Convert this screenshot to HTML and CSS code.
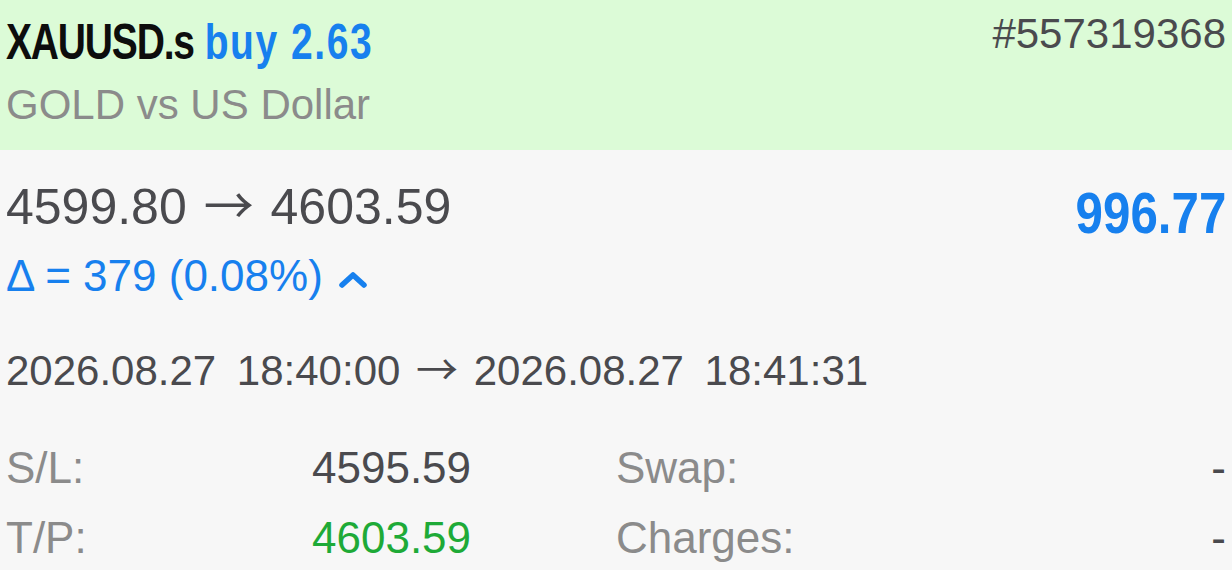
FILE: index.html
```html
<!DOCTYPE html>
<html lang="en">
<head>
  <meta charset="UTF-8">
  <meta name="viewport" content="width=device-width, initial-scale=1.0">
  <title>XAUUSD.s position</title>
  <link rel="stylesheet" href="styles.css">
</head>
<body>
  <div class="head">
    <div class="head-left">
      <div class="title"><span class="symbol">XAUUSD.s</span> <span class="side">buy 2.63</span></div>
      <div class="desc">GOLD vs US Dollar</div>
    </div>
    <div class="ticket">#557319368</div>
  </div>

  <div class="content">
    <div class="price-row">
      <div>
        <div class="prices">4599.80 <span class="arrow">→</span> 4603.59</div>
        <div class="delta">
          <span>Δ = 379 (0.08%)</span>
          <svg class="chevron" width="30" height="18" viewBox="0 0 30 18">
            <polyline points="4,14 15,4 26,14" fill="none" stroke="currentColor" stroke-width="5.5" stroke-linecap="round" stroke-linejoin="round"/>
          </svg>
        </div>
      </div>
      <div class="profit">996.77</div>
    </div>

    <div class="times">
      <span class="dt">2026.08.27 18:40:00</span> <span class="arrow">→</span> <span class="dt">2026.08.27 18:41:31</span>
    </div>

    <div class="details">
      <div class="label">S/L:</div>
      <div class="value">4595.59</div>
      <div class="label">Swap:</div>
      <div class="dash">-</div>

      <div class="label">T/P:</div>
      <div class="value tp">4603.59</div>
      <div class="label">Charges:</div>
      <div class="dash">-</div>
    </div>
  </div>
</body>
</html>
```

FILE: styles.css
```css
body {
  margin: 0;
  font-family: "Liberation Sans", Arial, sans-serif;
  font-size: 42px;
  color: #4a4a4e;
  background-color: #f7f7f7;
}
.head {
  display: flex;
  justify-content: space-between;
  height: 150px;
  box-sizing: border-box;
  padding: 12px 6px 0 6px;
  background-color: #dcfbd7;
}
.title {
  font-weight: bold;
  font-size: 50px;
  line-height: 60px;
  white-space: nowrap;
  transform: scaleX(0.78);
  transform-origin: left center;
}
.symbol {
  color: #0d0d0d;
  letter-spacing: -1.5px;
}
.side {
  color: #1780ee;
  letter-spacing: 2px;
}
.desc {
  margin-top: 8px;
  line-height: 50px;
  color: #8b8b8b;
}
.ticket {
  line-height: 43px;
}
.content {
  padding: 27px 6px 0 6px;
}
.price-row {
  display: flex;
  justify-content: space-between;
}
.prices {
  font-size: 50px;
  line-height: 60px;
  word-spacing: 3px;
}
.arrow {
  font-family: "Noto Sans CJK JP", "DejaVu Sans", sans-serif;
  line-height: 1;
}
.delta {
  display: flex;
  align-items: center;
  margin-top: 14px;
  font-size: 44px;
  line-height: 50px;
  color: #1780ee;
}
.chevron {
  margin: 7px 0 0 15px;
}
.profit {
  margin-top: 6px;
  font-weight: bold;
  font-size: 58px;
  line-height: 60px;
  color: #1780ee;
  transform: scaleX(0.85);
  transform-origin: right center;
}
.times {
  margin-top: 45px;
  line-height: 50px;
  word-spacing: 4px;
}
.dt {
  word-spacing: 9px;
}
.details {
  display: grid;
  grid-template-columns: 306px 304px 1fr auto;
  grid-auto-rows: 70px;
  align-items: center;
  margin-top: 37px;
  font-size: 44px;
}
.label {
  color: #8b8b8b;
}
.tp {
  color: #1eaa37;
}
.dash {
  text-align: right;
}
```
